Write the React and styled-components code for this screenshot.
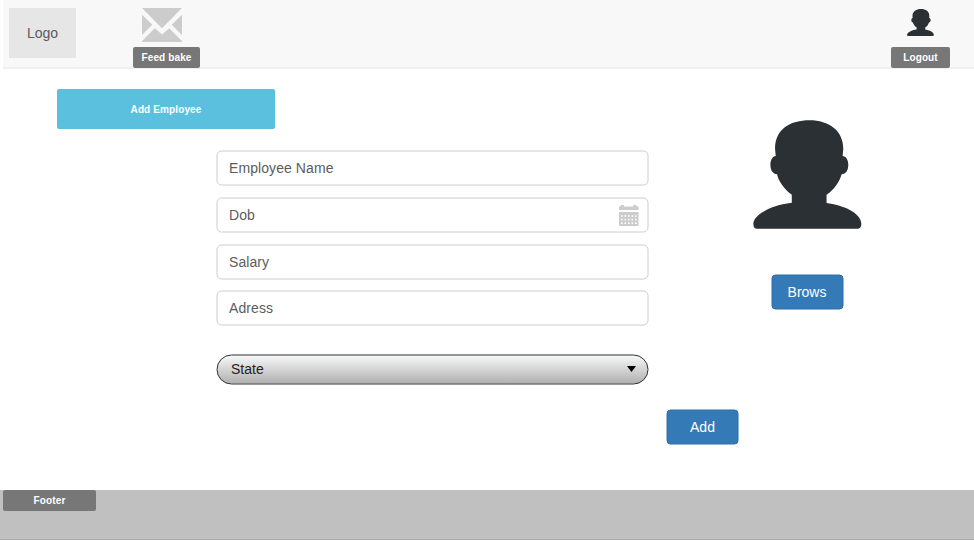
import React from "react";
import styled, { createGlobalStyle, css } from "styled-components";

const GlobalStyle = createGlobalStyle`
  * { box-sizing: border-box; }
  body {
    margin: 0;
    background: #fff;
    font-family: "Liberation Sans", Arial, sans-serif;
    font-size: 14px;
    overflow: hidden;
  }
  button, input { font: inherit; margin: 0; }
`;

/* Outline and fill painted behind the control, centred on half pixels. */
const softFrame = (stroke, fill, radius) => css`
  position: relative;
  z-index: 0;
  border: 0;
  background: none;
  &::before {
    content: "";
    position: absolute;
    z-index: -1;
    inset: 0 1px 1px 0;
    transform: translate(0.5px, 0.5px);
    border: 1px solid ${stroke};
    border-radius: ${radius}px;
    background: ${fill};
  }
`;

const Page = styled.div`
  width: 974px;
  height: 540px;
  display: flex;
  flex-direction: column;
`;

const Header = styled.header`
  height: 69px;
  margin-left: 3px;
  padding: 8px 24px 0 6px;
  display: flex;
  align-items: flex-start;
  background: #f8f8f8;
  border-bottom: 2px solid #efefef;
`;

const Logo = styled.div`
  width: 67px;
  height: 50px;
  display: flex;
  align-items: center;
  justify-content: center;
  background: #e6e6e6;
  color: #5a5a5a;
`;

const HeaderItem = styled.div`
  width: ${(p) => p.$width}px;
  height: 60px;
  padding-top: ${(p) => p.$top || 0}px;
  margin-left: ${(p) => p.$gap};
  display: flex;
  flex-direction: column;
  align-items: center;
  justify-content: space-between;
`;

const Tag = styled.button`
  width: ${(p) => p.$width}px;
  height: ${(p) => p.$height || 21}px;
  padding: 0;
  border: 0;
  border-radius: 2px;
  flex: none;
  background: ${(p) => p.$color || "#777"};
  color: #fff;
  font-size: 10px;
  font-weight: bold;
  letter-spacing: 0.12px;
  line-height: 21px;
`;

const Main = styled.main`
  height: 421px;
  padding: 20px 0 0 57px;
`;

const Columns = styled.div`
  display: flex;
  margin-left: 159px;
  padding-top: 21px;
`;

const Form = styled.form`
  width: 523px;
`;

const Fields = styled.div`
  width: 433px;
  display: flex;
  flex-direction: column;
  gap: 11px;
`;

const Field = styled.label`
  height: 36px;
  padding: 0 10px 0 13px;
  display: flex;
  align-items: center;
  margin-top: ${(p) => (p.$tight ? -1 : 0)}px;
  ${softFrame("#ccc", "#fff", 5)}
`;

const Input = styled.input`
  flex: 1;
  min-width: 0;
  padding: 0;
  border: 0;
  outline: 0;
  background: none;
  color: #555;
  letter-spacing: 0.08px;
  &::placeholder { color: #5c5c5c; opacity: 1; }
`;

const Select = styled.button`
  width: 433px;
  height: 31px;
  margin-top: 28px;
  padding: 0 13px 2px 15px;
  display: flex;
  align-items: center;
  justify-content: space-between;
  color: #222;
  ${softFrame("#2b3034", "linear-gradient(#f8f8f8, #b0b0b0)", 16)}
`;

const Submit = styled.div`
  display: flex;
  justify-content: flex-end;
  margin-top: 24px;
`;

const Button = styled.button`
  width: 73px;
  height: 36px;
  padding: 0;
  color: #fff;
  ${softFrame("#2e6da4", "#337ab7", 4)}
`;

const Photo = styled.aside`
  width: 108px;
  margin: -30px 0 0 14px;
  display: flex;
  flex-direction: column;
  align-items: center;
  gap: 45px;
`;

const Footer = styled.footer`
  height: 50px;
  padding-left: 3px;
  background: #c0c0c0;
  border-bottom: 1px solid #acacac;
`;

const Glyph = styled.svg`
  display: block;
  flex: none;
`;

const MailIcon = styled(Glyph)`
  margin-right: 9px;
`;

const Person = ({ size }) => (
  <Glyph width={size} height={size} viewBox="38 43 326 328" preserveAspectRatio="none" fill="#2b3034">
    <path d="M154 268C130 250 113 224 110 206C98 206 90 195 90 178C90 162 97 152 106 151L104 130C104 70 150 44 207 44C265 44 308 75 308 130L306 151C316 152 323 162 323 178C323 196 315 206 303 206C298 225 282 252 258 268V293C330 304 362 332 362 355Q362 370 350 370H50Q39 370 39 355C39 332 85 300 154 292Z" />
  </Glyph>
);

const Envelope = () => (
  <MailIcon width="40" height="34" viewBox="0 0 40 34" fill="#ccc">
    <path d="M0 0H40L20 20.3ZM0 6.7L10.3 16.7L0 27ZM40 6.7V27L29.7 16.7ZM0 34V33L12.8 20.3L20 26.5L27.2 20.3L40 33V34Z" />
  </MailIcon>
);

const Calendar = () => (
  <Glyph width="20" height="21" viewBox="0 0 20 21">
    <path fill="#ccc" d="M0 1.5H1.8V0H5V1.5H14.3V0H17.5V1.5H19.5V5H0ZM0 7H19.5V21H0Z" />
    {[0, 1, 2].map((r) =>
      [0, 1, 2, 3, 4].map((c) => (
        <rect key={`${r}${c}`} x={2 + c * 3.5} y={10.2 + r * 3.6} width="1.6" height="1.6" fill="#fff" />
      ))
    )}
  </Glyph>
);

const Caret = () => (
  <Glyph width="9" height="6" viewBox="0 0 9 6">
    <path d="M0 0H9L4.5 6Z" />
  </Glyph>
);

export default function App() {
  return (
    <>
      <GlobalStyle />
      <Page>
        <Header>
          <Logo>Logo</Logo>
          <HeaderItem $width={67} $gap="57px">
            <Envelope />
            <Tag $width={67}>Feed bake</Tag>
          </HeaderItem>
          <HeaderItem $width={59} $gap="auto" $top={1}>
            <Person size={27} />
            <Tag $width={59}>Logout</Tag>
          </HeaderItem>
        </Header>
        <Main>
          <Tag $width={218} $height={40} $color="#5bc0de">Add Employee</Tag>
          <Columns>
            <Form onSubmit={(e) => e.preventDefault()}>
              <Fields>
                <Field><Input placeholder="Employee Name" /></Field>
                <Field><Input placeholder="Dob" /><Calendar /></Field>
                <Field><Input placeholder="Salary" /></Field>
                <Field $tight><Input placeholder="Adress" /></Field>
              </Fields>
              <Select type="button">State<Caret /></Select>
              <Submit><Button>Add</Button></Submit>
            </Form>
            <Photo>
              <Person size={109} />
              <Button>Brows</Button>
            </Photo>
          </Columns>
        </Main>
        <Footer><Tag $width={93}>Footer</Tag></Footer>
      </Page>
    </>
  );
}
